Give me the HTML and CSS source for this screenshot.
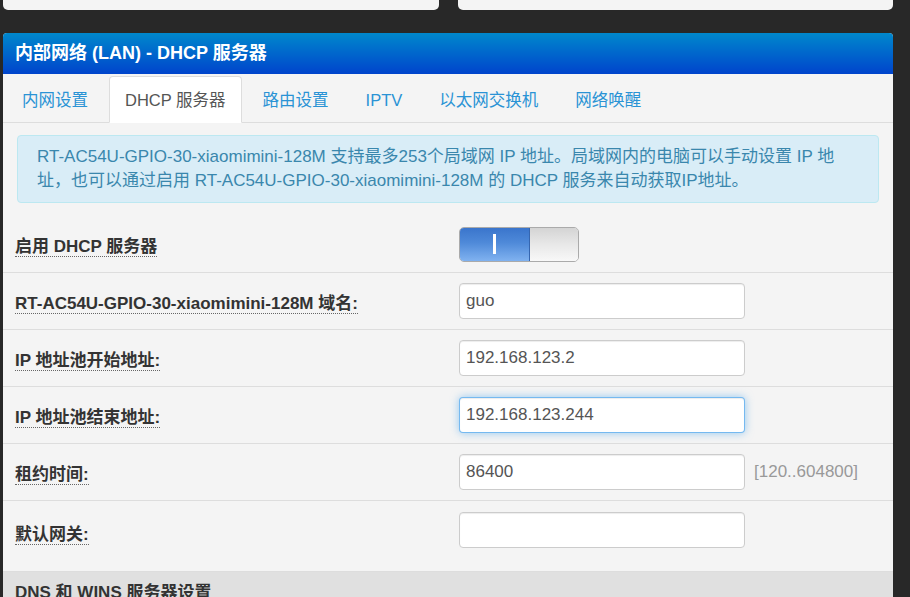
FILE: index.html
```html
<!DOCTYPE html>
<html lang="zh-CN">
<head>
    <meta charset="UTF-8">
    <meta name="viewport" content="width=device-width, initial-scale=1.0">
    <title>内部网络 (LAN) - DHCP 服务器</title>
    <link rel="stylesheet" href="styles.css">
</head>
<body>
    <div class="page">
        <div class="top-cards">
            <div class="card"></div>
            <div class="card"></div>
        </div>

        <div class="panel">
            <div class="panel-head">内部网络 (LAN) - DHCP 服务器</div>

            <ul class="tabs">
                <li><a href="#">内网设置</a></li>
                <li class="active"><a href="#">DHCP 服务器</a></li>
                <li><a href="#">路由设置</a></li>
                <li><a href="#">IPTV</a></li>
                <li><a href="#">以太网交换机</a></li>
                <li><a href="#">网络唤醒</a></li>
            </ul>

            <div class="panel-body">
                <div class="alert">
                    RT-AC54U-GPIO-30-xiaomimini-128M 支持最多253个局域网 IP 地址。局域网内的电脑可以手动设置 IP 地址，也可以通过启用 RT-AC54U-GPIO-30-xiaomimini-128M 的 DHCP 服务来自动获取IP地址。
                </div>

                <div class="form-row">
                    <div class="label-cell"><span class="label">启用 DHCP 服务器</span></div>
                    <div class="field-cell">
                        <div class="switch">
                            <span class="switch-on"><span class="switch-bar"></span></span>
                            <span class="switch-off"></span>
                        </div>
                    </div>
                </div>

                <div class="form-row">
                    <div class="label-cell"><span class="label">RT-AC54U-GPIO-30-xiaomimini-128M 域名:</span></div>
                    <div class="field-cell"><input class="input" type="text" value="guo"></div>
                </div>

                <div class="form-row">
                    <div class="label-cell"><span class="label">IP 地址池开始地址:</span></div>
                    <div class="field-cell"><input class="input" type="text" value="192.168.123.2"></div>
                </div>

                <div class="form-row">
                    <div class="label-cell"><span class="label">IP 地址池结束地址:</span></div>
                    <div class="field-cell"><input class="input focused" type="text" value="192.168.123.244"></div>
                </div>

                <div class="form-row">
                    <div class="label-cell"><span class="label">租约时间:</span></div>
                    <div class="field-cell">
                        <input class="input" type="text" value="86400">
                        <span class="hint">[120..604800]</span>
                    </div>
                </div>

                <div class="form-row last">
                    <div class="label-cell"><span class="label">默认网关:</span></div>
                    <div class="field-cell"><input class="input" type="text" value=""></div>
                </div>

                <div class="section-head">DNS 和 WINS 服务器设置</div>
            </div>
        </div>
    </div>
</body>
</html>
```

FILE: styles.css
```css
:root {
    --dark: #282828;
    --panel: #f4f4f4;
    --line: #dddddd;
    --text: #333;
    --link: #2a93d5;
}

* {
    margin: 0;
    padding: 0;
    box-sizing: border-box;
}

body {
    font-family: 'Liberation Sans', Arial, 'Noto Sans CJK SC', sans-serif;
    background: var(--dark);
    color: var(--text);
    font-size: 17px;
    overflow: hidden;
}

.page {
    width: 890px;
    margin-left: 3px;
}

.top-cards {
    display: grid;
    grid-template-columns: 1fr 1fr;
    gap: 19px;
}

.card {
    height: 10px;
    background: var(--panel);
    border-radius: 0 0 5px 5px;
}

.panel {
    margin-top: 23px;
    background: var(--panel);
    border-radius: 4px 4px 0 0;
}

.panel-head {
    height: 41px;
    line-height: 41px;
    padding: 0 12px;
    color: #fff;
    font-weight: bold;
    font-size: 18px;
    background: linear-gradient(to bottom, #0088cc 0%, #0044cc 100%);
    border-radius: 4px 4px 0 0;
}

.tabs {
    list-style: none;
    display: flex;
    padding: 2px 0 0 3px;
    border-bottom: 1px solid var(--line);
    height: 49px;
    font-size: 16.5px;
}

.tabs li {
    margin-right: 5px;
}

.tabs a {
    display: block;
    height: 47px;
    line-height: 46px;
    padding: 0 15px;
    color: var(--link);
    text-decoration: none;
    border: 1px solid transparent;
    border-radius: 4px 4px 0 0;
}

.tabs li.active a {
    background: #fff;
    color: #555;
    border-color: var(--line);
    border-bottom-color: transparent;
}

.panel-body {
    padding-top: 12px;
}

.alert {
    margin: 0 14px 13px;
    padding: 9px 40px 9px 19px;
    line-height: 24px;
    font-size: 17px;
    color: #3a87ad;
    background: #d9edf7;
    border: 1px solid #bce8f1;
    border-radius: 4px;
}

.form-row {
    display: grid;
    grid-template-columns: 456px 1fr;
    align-items: center;
    min-height: 57px;
    border-bottom: 1px solid var(--line);
}

.form-row.last {
    min-height: 70px;
    align-items: start;
    padding-top: 11px;
    border-bottom: none;
}

.label-cell {
    padding-left: 12px;
}

.form-row.last .label-cell {
    padding-top: 8px;
}

.label {
    font-weight: bold;
    border-bottom: 1px dotted #666;
}

.field-cell {
    display: flex;
    align-items: center;
}

.input {
    width: 286px;
    height: 36px;
    padding: 0 6px;
    font-family: inherit;
    font-size: 17px;
    color: #555;
    background: #fff;
    border: 1px solid #ccc;
    border-radius: 4px;
    box-shadow: inset 0 1px 1px rgba(0, 0, 0, 0.075);
    outline: none;
}

.input.focused {
    border-color: rgba(82, 168, 236, 0.8);
    box-shadow: inset 0 1px 1px rgba(0, 0, 0, 0.075), 0 0 8px rgba(82, 168, 236, 0.6);
}

.hint {
    margin-left: 9px;
    color: #999;
}

.switch {
    display: flex;
    width: 120px;
    height: 35px;
    border: 1px solid #aaa;
    border-radius: 5px;
    overflow: hidden;
}

.switch-on {
    width: 70px;
    display: flex;
    align-items: center;
    justify-content: center;
    background: linear-gradient(to bottom, #3a75cc 0%, #4f8ad9 45%, #80b2f0 100%);
    border-right: 1px solid #3566b0;
}

.switch-bar {
    width: 3px;
    height: 20px;
    background: #fff;
}

.switch-off {
    flex: 1;
    background: linear-gradient(to bottom, #d4d4d4 0%, #e8e8e8 50%, #f8f8f8 100%);
}

.section-head {
    padding: 10px 12px;
    background: #e0e0e0;
    border-top: 1px solid var(--line);
    font-weight: bold;
    line-height: 22px;
}
```
